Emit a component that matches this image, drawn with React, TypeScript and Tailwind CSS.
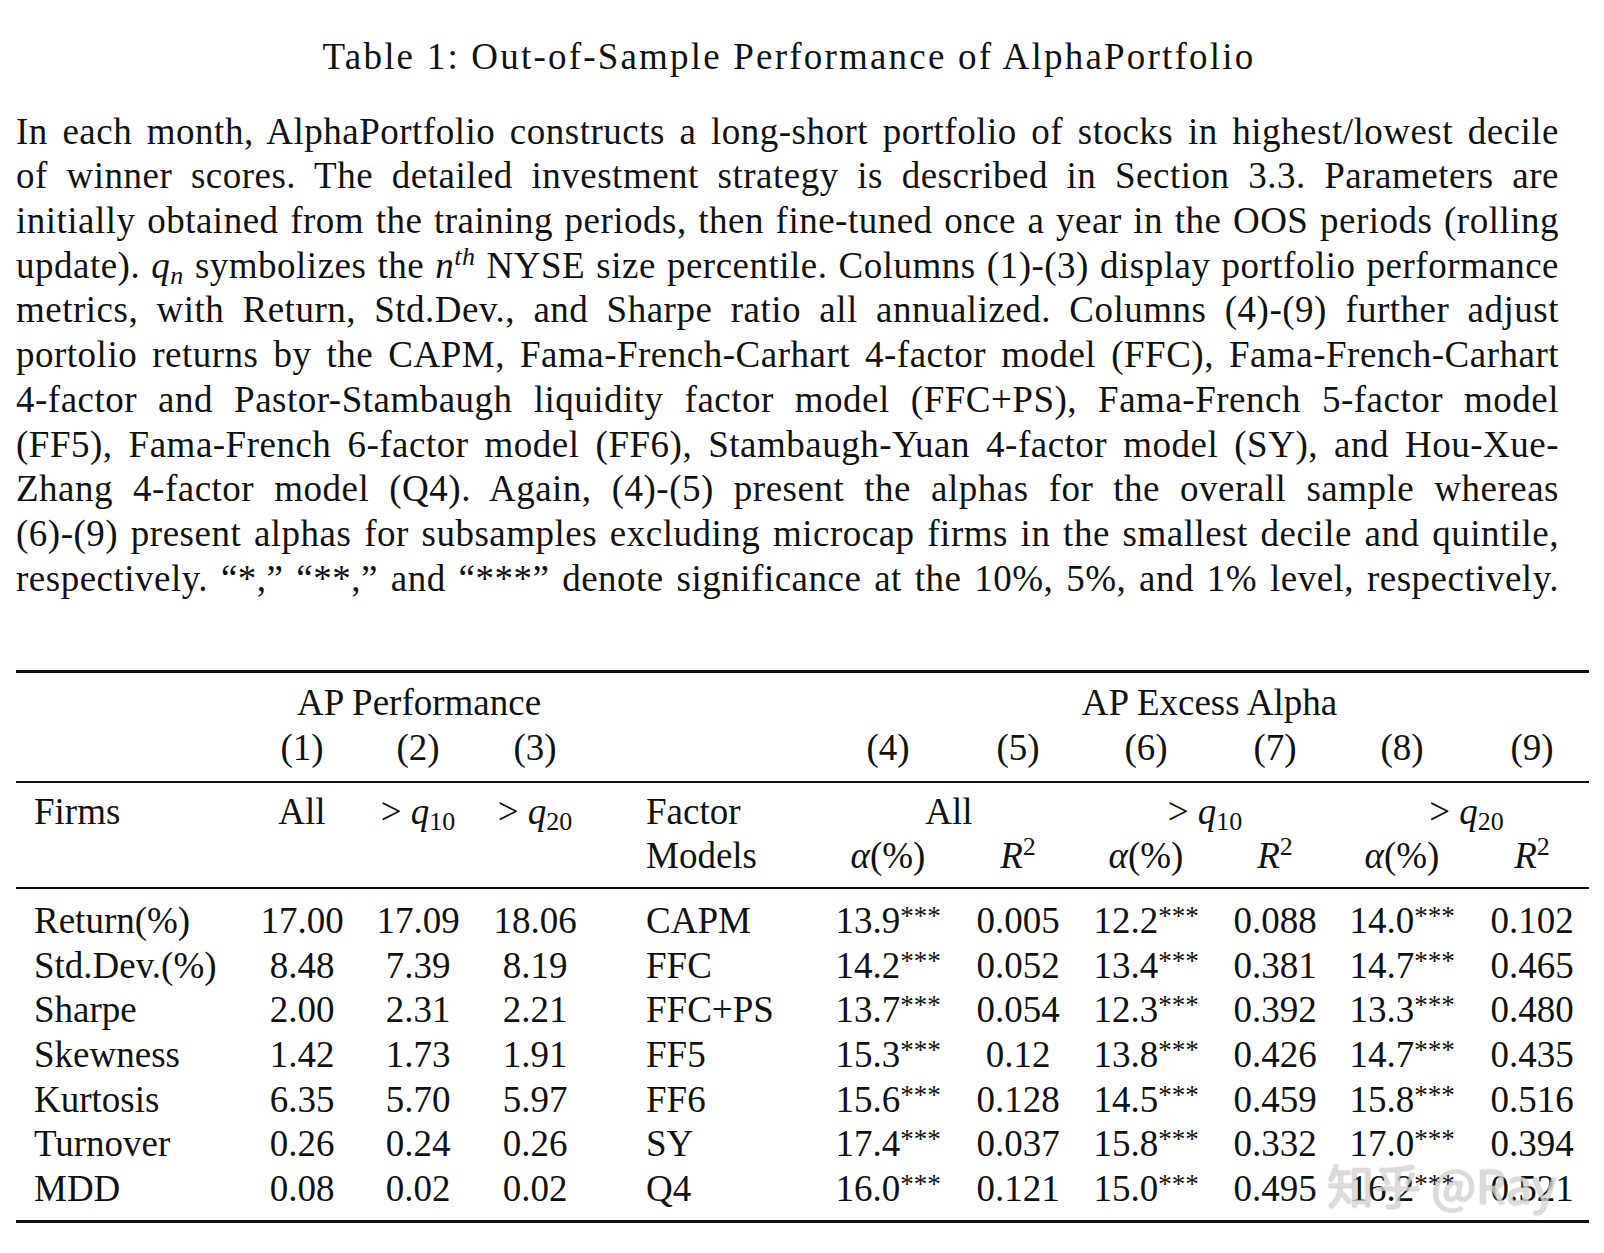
import React from 'react';

/* ── 表格数据 ── */
const rows: string[][] = [
  ['Return(%)', '17.00', '17.09', '18.06', 'CAPM', '13.9', '0.005', '12.2', '0.088', '14.0', '0.102'],
  ['Std.Dev.(%)', '8.48', '7.39', '8.19', 'FFC', '14.2', '0.052', '13.4', '0.381', '14.7', '0.465'],
  ['Sharpe', '2.00', '2.31', '2.21', 'FFC+PS', '13.7', '0.054', '12.3', '0.392', '13.3', '0.480'],
  ['Skewness', '1.42', '1.73', '1.91', 'FF5', '15.3', '0.12', '13.8', '0.426', '14.7', '0.435'],
  ['Kurtosis', '6.35', '5.70', '5.97', 'FF6', '15.6', '0.128', '14.5', '0.459', '15.8', '0.516'],
  ['Turnover', '0.26', '0.24', '0.26', 'SY', '17.4', '0.037', '15.8', '0.332', '17.0', '0.394'],
  ['MDD', '0.08', '0.02', '0.02', 'Q4', '16.0', '0.121', '15.0', '0.495', '16.2', '0.521'],
];

const grid =
  'grid grid-cols-[228px_116px_116px_118px_232px_124px_136px_120px_138px_116px_129px] h-[44.7px] items-center';

/* ── 两端对齐的一行 ── */
function Line({ children }: { children: React.ReactNode }) {
  return <div className="h-[44.7px] text-justify [text-align-last:justify]">{children}</div>;
}

function Q({ n }: { n: string }) {
  return (
    <span>
      &gt; <i>q</i>
      <sub className="text-[26px]">{n}</sub>
    </span>
  );
}

function Alpha() {
  return (
    <span>
      <i>α</i>(%)
    </span>
  );
}

function R2() {
  return (
    <span>
      <i>R</i>
      <sup className="text-[26px]">2</sup>
    </span>
  );
}

function Stars() {
  return <span className="relative -top-[8px] text-[27px] leading-none">***</span>;
}

export default function App() {
  return (
    <div className="relative min-h-screen w-[1604px] bg-white text-[#111] font-['Liberation_Serif','Noto_Sans_CJK_SC',serif] text-[37px] leading-[44.7px]">
      {/* 标题 */}
      <div className="pt-[35px] pr-[26px] h-[79.7px] text-center tracking-[2.2px]">
        Table 1: Out-of-Sample Performance of AlphaPortfolio
      </div>

      {/* 说明段落 */}
      <div className="mt-[30px] ml-[16px] w-[1543px] tracking-[0.5px]">
        <Line>In each month, AlphaPortfolio constructs a long-short portfolio of stocks in highest/lowest decile</Line>
        <Line>of winner scores. The detailed investment strategy is described in Section 3.3. Parameters are</Line>
        <Line>initially obtained from the training periods, then fine-tuned once a year in the OOS periods (rolling</Line>
        <Line>
          update). <i>q</i>
          <sub className="text-[26px] italic">n</sub> symbolizes the <i>n</i>
          <sup className="text-[26px] italic">th</sup> NYSE size percentile. Columns (1)-(3) display portfolio performance
        </Line>
        <Line>metrics, with Return, Std.Dev., and Sharpe ratio all annualized. Columns (4)-(9) further adjust</Line>
        <Line>portolio returns by the CAPM, Fama-French-Carhart 4-factor model (FFC), Fama-French-Carhart</Line>
        <Line>4-factor and Pastor-Stambaugh liquidity factor model (FFC+PS), Fama-French 5-factor model</Line>
        <Line>(FF5), Fama-French 6-factor model (FF6), Stambaugh-Yuan 4-factor model (SY), and Hou-Xue-</Line>
        <Line>Zhang 4-factor model (Q4). Again, (4)-(5) present the alphas for the overall sample whereas</Line>
        <Line>(6)-(9) present alphas for subsamples excluding microcap firms in the smallest decile and quintile,</Line>
        <Line>respectively. “*,” “**,” and “***” denote significance at the 10%, 5%, and 1% level, respectively.</Line>
      </div>

      {/* 表格 */}
      <div className="mt-[69px] ml-[16px] w-[1573px]">
        <div className="h-[3px] bg-[#111]" />
        <div className="pt-[8px]">
          <div className={grid}>
            <div />
            <div className="col-span-3 text-center">AP Performance</div>
            <div />
            <div className="col-span-6 text-center pl-[4px]">AP Excess Alpha</div>
          </div>
          <div className={grid}>
            <div />
            <div className="text-center">(1)</div>
            <div className="text-center">(2)</div>
            <div className="text-center">(3)</div>
            <div />
            <div className="text-center">(4)</div>
            <div className="text-center">(5)</div>
            <div className="text-center">(6)</div>
            <div className="text-center">(7)</div>
            <div className="text-center">(8)</div>
            <div className="text-center pl-[15px]">(9)</div>
          </div>
        </div>
        <div className="mt-[10px] h-[2px] bg-[#111]" />
        <div className="pt-[7px]">
          <div className={grid}>
            <div className="pl-[18px]">Firms</div>
            <div className="text-center">All</div>
            <div className="text-center"><Q n="10" /></div>
            <div className="text-center"><Q n="20" /></div>
            <div className="pl-[52px]">Factor</div>
            <div className="col-span-2 text-center pr-[14px]">All</div>
            <div className="col-span-2 text-center pr-[20px]"><Q n="10" /></div>
            <div className="col-span-2 text-center"><Q n="20" /></div>
          </div>
          <div className={grid}>
            <div />
            <div />
            <div />
            <div />
            <div className="pl-[52px]">Models</div>
            <div className="text-center"><Alpha /></div>
            <div className="text-center"><R2 /></div>
            <div className="text-center"><Alpha /></div>
            <div className="text-center"><R2 /></div>
            <div className="text-center"><Alpha /></div>
            <div className="text-center pl-[15px]"><R2 /></div>
          </div>
        </div>
        <div className="mt-[8px] h-[2px] bg-[#111]" />
        <div className="pt-[10px]">
          {rows.map(r => (
            <div key={r[0]} className={grid}>
              <div className="pl-[18px]">{r[0]}</div>
              <div className="text-center">{r[1]}</div>
              <div className="text-center">{r[2]}</div>
              <div className="text-center">{r[3]}</div>
              <div className="pl-[52px]">{r[4]}</div>
              <div className="text-center">
                {r[5]}
                <Stars />
              </div>
              <div className="text-center">{r[6]}</div>
              <div className="text-center">
                {r[7]}
                <Stars />
              </div>
              <div className="text-center">{r[8]}</div>
              <div className="text-center">
                {r[9]}
                <Stars />
              </div>
              <div className="text-center pl-[15px]">{r[10]}</div>
            </div>
          ))}
        </div>
        <div className="mt-[8px] h-[3px] bg-[#111]" />
      </div>

      {/* 水印 */}
      <div className="absolute left-[1327px] top-[1160px] whitespace-nowrap font-['Noto_Sans_CJK_SC',sans-serif] text-[47px] leading-none text-[#d4d4d4] opacity-80 [text-shadow:0_0_2px_#8a8a8a]">
        知乎 @Ray
      </div>
    </div>
  );
}
